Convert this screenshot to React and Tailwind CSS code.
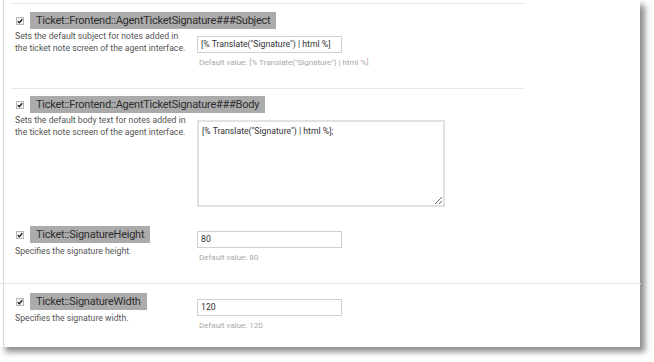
import React from "react";

const font = { fontFamily: "Roboto, 'Liberation Sans', sans-serif" };

function Check() {
  return (
    <svg width="8" height="8" viewBox="0 0 8 8" className="shrink-0">
      <rect x="0.5" y="0.5" width="7" height="7" fill="#f4f4f4" stroke="#b8b8b8" />
      <path d="M1.8 4.2 L3.3 5.7 L6.3 2.2" fill="none" stroke="#222" strokeWidth="1.4" />
    </svg>
  );
}

function Label({ text }) {
  return (
    <div className="flex items-center h-[17px]">
      <div className="w-[15px] flex justify-start pl-[1px]">
        <Check />
      </div>
      <div className="h-[17px] bg-[#ababab] text-[#2e2e2e] text-[11px] tracking-[-0.25px] leading-[17px] px-[6px] whitespace-nowrap">
        {text}
      </div>
    </div>
  );
}

function Desc({ children, className = "" }) {
  return (
    <div className={"text-[8.7px] leading-[12px] text-[#555] w-[182px] whitespace-nowrap " + className}>{children}</div>
  );
}

function Input({ value }) {
  return (
    <div className="w-[145px] h-[17px] border border-[#cfcfcf] bg-white text-[8.7px] leading-[15px] text-[#333] px-[3px] whitespace-nowrap overflow-hidden">
      {value}
    </div>
  );
}

function Def({ children }) {
  return <div className="text-[8px] leading-[10px] text-[#a8a8a8] mt-[5px] pl-[2px] whitespace-nowrap">{children}</div>;
}

export default function App() {
  const sig = '[% Translate("Signature") | html %]';
  return (
    <div className="w-[654px] h-[362px] bg-white" style={font}>
      <div className="w-[640px] h-[347px] bg-white shadow-[5px_5px_6px_rgba(0,0,0,0.45)]">
        <div className="ml-[3px] h-full border-l border-[#d9d9d9] flex flex-col">
          <div className="mt-[3px] ml-[7px] w-[513px] border-t border-[#e8e8e8]" />
          <div className="h-[84px] pl-[11px] pt-[8px]">
            <Label text="Ticket::Frontend::AgentTicketSignature###Subject" />
            <div className="flex">
              <Desc className="pt-[1px]">
                Sets the default subject for notes added in
                <br />
                the ticket note screen of the agent interface.
              </Desc>
              <div className="mt-[7px]">
                <Input value={sig} />
                <Def>Default value: {sig}</Def>
              </div>
            </div>
          </div>
          <div className="ml-[7px] w-[513px] border-t border-[#e8e8e8]" />
          <div className="h-[128px] pl-[11px] pt-[7px]">
            <Label text="Ticket::Frontend::AgentTicketSignature###Body" />
            <div className="flex">
              <Desc className="pt-[1px]">
                Sets the default body text for notes added in
                <br />
                the ticket note screen of the agent interface.
              </Desc>
              <textarea
                readOnly
                defaultValue={sig + ";"}
                className="mt-[7px] w-[248px] h-[87px] border-2 border-[#e2e2e2] bg-white text-[8.7px] leading-[12px] text-[#333] px-[3px] py-[3px] outline-none"
                style={font}
              />
            </div>
          </div>
          <div className="h-[66px] pl-[11px] pt-[9px] flex">
            <div className="w-[182px]">
              <Label text="Ticket::SignatureHeight" />
              <Desc className="mt-[2px]">Specifies the signature height.</Desc>
            </div>
            <div className="mt-[5px]">
              <Input value="80" />
              <Def>Default value: 80</Def>
            </div>
          </div>
          <div className="-ml-[4px] w-[641px] border-t border-[#e4e4e4]" />
          <div className="pl-[11px] pt-[9px] flex">
            <div className="w-[182px]">
              <Label text="Ticket::SignatureWidth" />
              <Desc className="mt-[2px]">Specifies the signature width.</Desc>
            </div>
            <div className="mt-[6px]">
              <Input value="120" />
              <Def>Default value: 120</Def>
            </div>
          </div>
        </div>
      </div>
    </div>
  );
}
